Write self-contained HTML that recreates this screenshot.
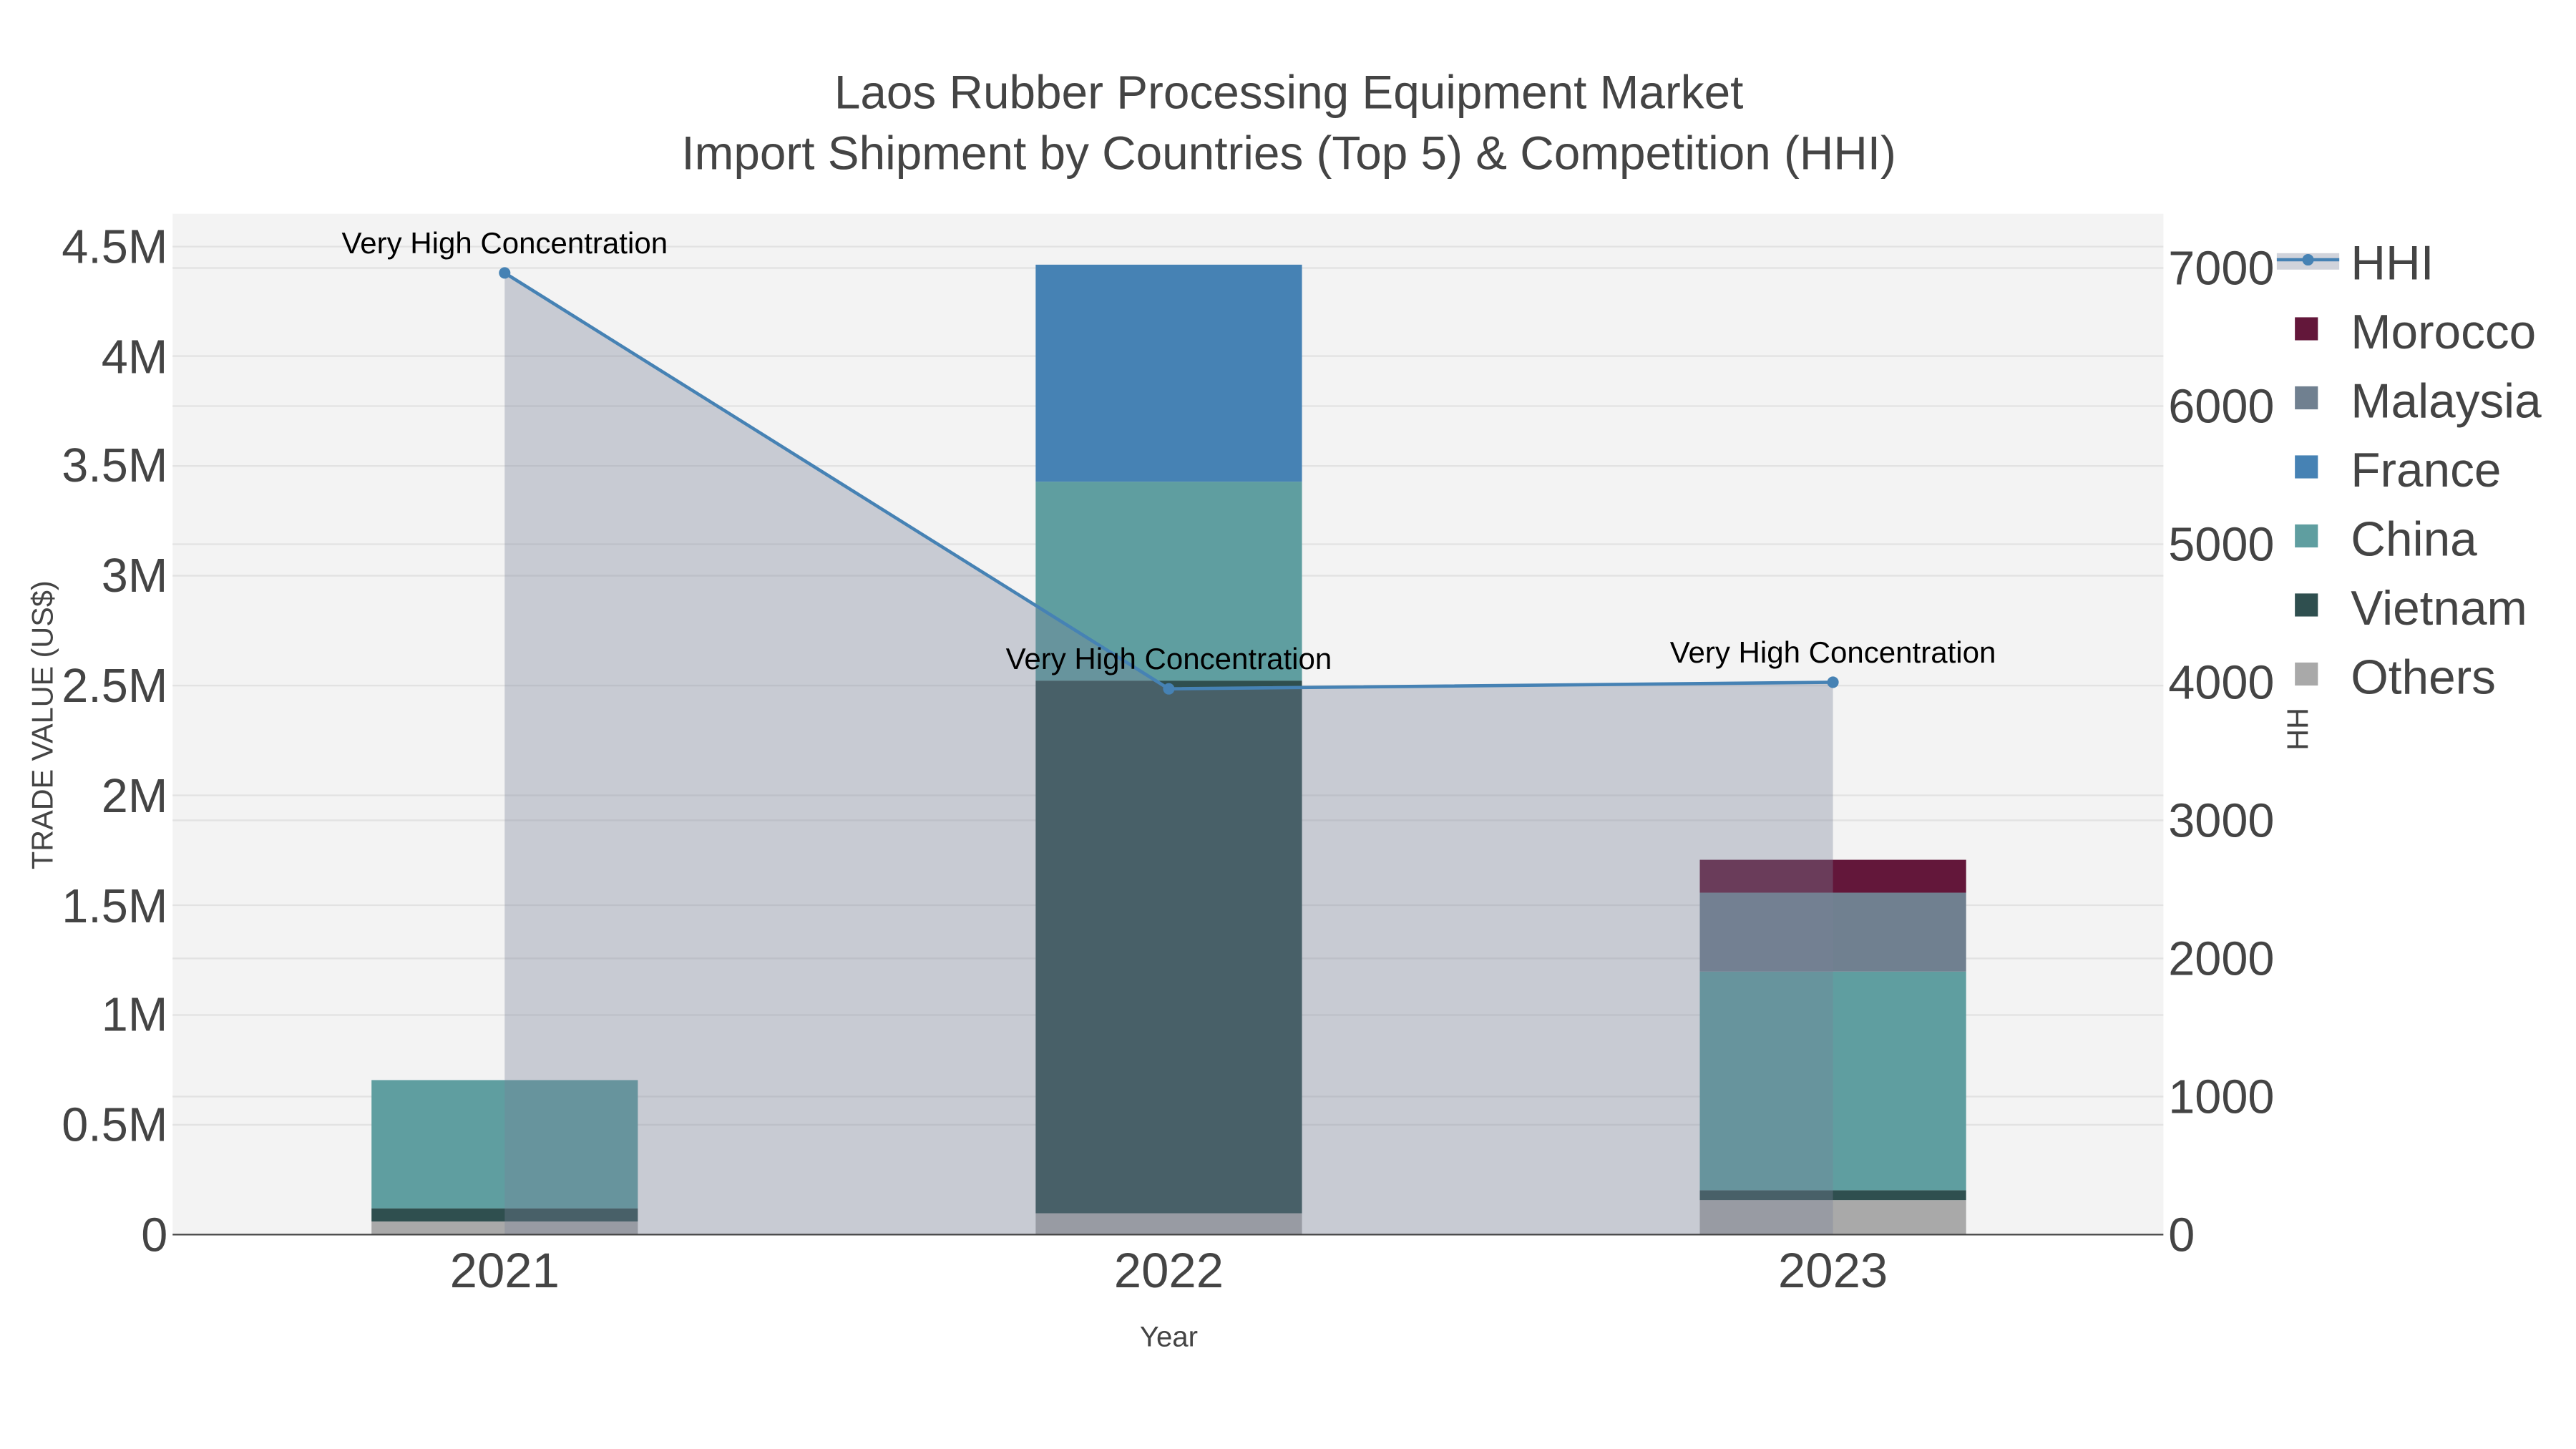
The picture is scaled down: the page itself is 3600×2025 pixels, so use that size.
<!DOCTYPE html>
<html><head><meta charset="utf-8"><style>html,body{margin:0;padding:0;background:#fff}svg{display:block}text{font-family:"Liberation Sans",Arial,sans-serif}</style></head><body>
<svg width="3600" height="2025" viewBox="0 0 1567 881.4" preserveAspectRatio="none" xmlns="http://www.w3.org/2000/svg">
<rect width="1567" height="882" fill="#fff"/>
<rect x="105" y="130" width="1211" height="621" fill="#f3f3f3"/>
<g stroke="#e2e2e2" stroke-width="1">
<line x1="105" x2="1316" y1="684.2" y2="684.2"/><line x1="105" x2="1316" y1="617.4" y2="617.4"/><line x1="105" x2="1316" y1="550.6" y2="550.6"/><line x1="105" x2="1316" y1="483.8" y2="483.8"/><line x1="105" x2="1316" y1="417" y2="417"/><line x1="105" x2="1316" y1="350.2" y2="350.2"/><line x1="105" x2="1316" y1="283.4" y2="283.4"/><line x1="105" x2="1316" y1="216.6" y2="216.6"/><line x1="105" x2="1316" y1="150" y2="150"/>
<line x1="105" x2="1316" y1="667" y2="667"/><line x1="105" x2="1316" y1="583" y2="583"/><line x1="105" x2="1316" y1="499" y2="499"/><line x1="105" x2="1316" y1="331" y2="331"/><line x1="105" x2="1316" y1="247" y2="247"/><line x1="105" x2="1316" y1="163" y2="163"/>
</g>
<rect x="226" y="743" width="162" height="8" fill="#a9a9a9"/>
<rect x="226" y="735" width="162" height="8" fill="#2f4f4f"/>
<rect x="226" y="657" width="162" height="78" fill="#5f9ea0"/>
<rect x="630" y="738" width="162" height="13" fill="#a9a9a9"/>
<rect x="630" y="414" width="162" height="324" fill="#2f4f4f"/>
<rect x="630" y="293" width="162" height="121" fill="#5f9ea0"/>
<rect x="630" y="161" width="162" height="132" fill="#4682b4"/>
<rect x="1034" y="730" width="162" height="21" fill="#a9a9a9"/>
<rect x="1034" y="724" width="162" height="6" fill="#2f4f4f"/>
<rect x="1034" y="591" width="162" height="133" fill="#5f9ea0"/>
<rect x="1034" y="543" width="162" height="48" fill="#708090"/>
<rect x="1034" y="523" width="162" height="20" fill="#63173a"/>
<polygon points="307,166 711,419 1115,415 1115,751 307,751" fill="rgb(120,130,152)" fill-opacity="0.35"/>
<line x1="105" x2="1316" y1="751" y2="751" stroke="#444" stroke-width="1"/>
<polyline points="307,166 711,419 1115,415" fill="none" stroke="#4682b4" stroke-width="2"/>
<circle cx="307" cy="166" r="3.5" fill="#4682b4"/><circle cx="711" cy="419" r="3.5" fill="#4682b4"/><circle cx="1115" cy="415" r="3.5" fill="#4682b4"/>
<g font-size="18.3" fill="#000" text-anchor="middle">
<text x="307" y="154">Very High Concentration</text><text x="711" y="407">Very High Concentration</text><text x="1115" y="403">Very High Concentration</text></g>
<g font-size="28.6" fill="#444" text-anchor="middle">
<text x="784" y="66">Laos Rubber Processing Equipment Market</text>
<text x="784" y="103">Import Shipment by Countries (Top 5) &amp; Competition (HHI)</text>
</g>
<g font-size="29" fill="#444" text-anchor="end">
<text x="102" y="761">0</text><text x="102" y="694">0.5M</text><text x="102" y="627">1M</text><text x="102" y="561">1.5M</text><text x="102" y="494">2M</text><text x="102" y="427">2.5M</text><text x="102" y="360">3M</text><text x="102" y="293">3.5M</text><text x="102" y="227">4M</text><text x="102" y="160">4.5M</text>
</g>
<g font-size="29" fill="#444">
<text x="1319" y="761">0</text><text x="1319" y="677">1000</text><text x="1319" y="593">2000</text><text x="1319" y="509">3000</text><text x="1319" y="425">4000</text><text x="1319" y="341">5000</text><text x="1319" y="257">6000</text><text x="1319" y="173">7000</text>
</g>
<g font-size="30" fill="#444" text-anchor="middle">
<text x="307" y="783">2021</text><text x="711" y="783">2022</text><text x="1115" y="783">2023</text></g>
<text x="711" y="819" font-size="17.5" fill="#444" text-anchor="middle">Year</text>
<text transform="translate(32,441) rotate(-90)" font-size="18" fill="#444" text-anchor="middle">TRADE VALUE (US$)</text>
<text transform="translate(1404,441) rotate(-90)" font-size="18" fill="#444" text-anchor="middle">HHI</text>
<rect x="1383" y="140" width="184" height="290" fill="#fff"/>
<rect x="1385" y="154" width="38" height="10" fill="rgb(120,130,152)" fill-opacity="0.35"/>
<line x1="1385" x2="1423" y1="158" y2="158" stroke="#4682b4" stroke-width="2"/><circle cx="1404" cy="158" r="3.5" fill="#4682b4"/>
<rect x="1396" y="193" width="14" height="14" fill="#63173a"/>
<rect x="1396" y="235" width="14" height="14" fill="#708090"/>
<rect x="1396" y="277" width="14" height="14" fill="#4682b4"/>
<rect x="1396" y="319" width="14" height="14" fill="#5f9ea0"/>
<rect x="1396" y="361" width="14" height="14" fill="#2f4f4f"/>
<rect x="1396" y="403" width="14" height="14" fill="#a9a9a9"/>
<g font-size="29.4" fill="#444">
<text x="1430" y="170">HHI</text><text x="1430" y="212">Morocco</text><text x="1430" y="254">Malaysia</text><text x="1430" y="296">France</text><text x="1430" y="338">China</text><text x="1430" y="380">Vietnam</text><text x="1430" y="422">Others</text></g>
</svg>
</body></html>
